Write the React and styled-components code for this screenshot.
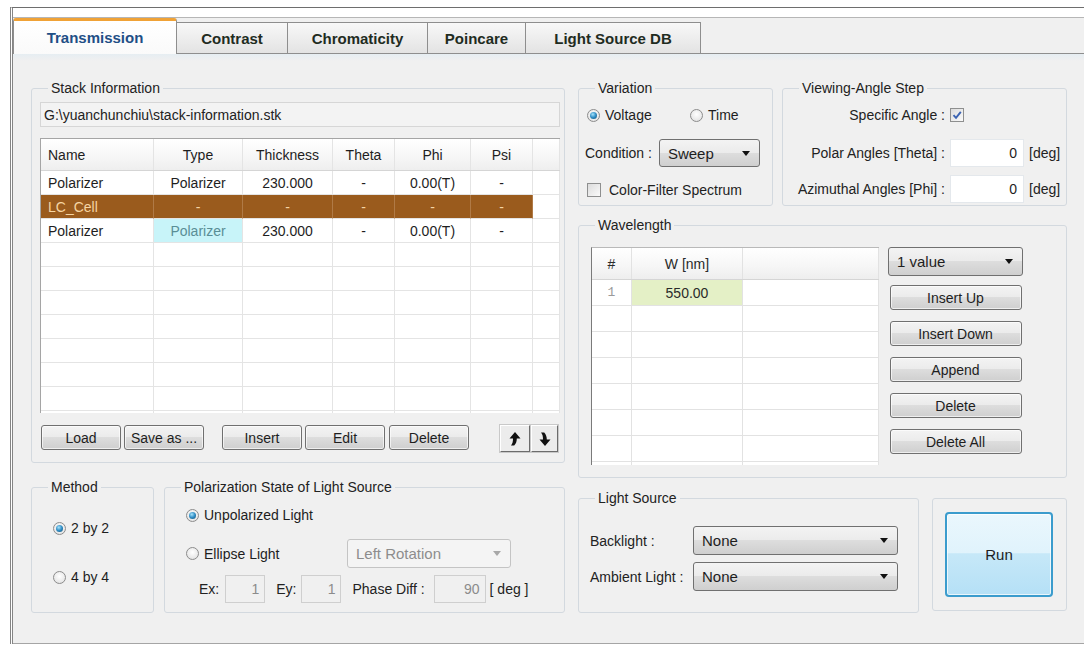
import React from "react";
import styled, { createGlobalStyle } from "styled-components";

const GlobalStyle = createGlobalStyle`
  * { box-sizing: border-box; }
  html, body { margin: 0; padding: 0; background: #fff; }
  body {
    font-family: "Liberation Sans", Arial, sans-serif;
    font-size: 14px;
    color: #1e1e1e;
  }
`;

const Window = styled.div`
  margin: 7px 0 0 10px;
  height: 637px;
  border-top: 1px solid #6e6e6e;
  border-left: 3px double #858585;
  display: flex;
  flex-direction: column;
`;

const TabStrip = styled.div`
  margin-top: 9px;
  height: 37px;
  display: flex;
  align-items: flex-end;
  background: #f0f0f0;
  border-top: 1px solid #b6b6b6;
  border-bottom: 1px solid #8e8e8e;
`;

const Tab = styled.div`
  width: ${(p) => p.$w}px;
  height: ${(p) => (p.$active ? 36 : 31)}px;
  margin-bottom: ${(p) => (p.$active ? -1 : 0)}px;
  display: flex;
  align-items: center;
  justify-content: center;
  font-size: 15px;
  font-weight: bold;
  color: ${(p) => (p.$active ? "#1f4f86" : "#1f2c1f")};
  border-right: 1px solid #8e8e8e;
  border-top: ${(p) => (p.$active ? "3px solid #f0a236" : "1px solid #8e8e8e")};
  border-left: ${(p) => (p.$active ? "1px solid #8e8e8e" : "none")};
  border-radius: ${(p) => (p.$active ? "3px 3px 0 0" : "0")};
  background: ${(p) =>
    p.$active
      ? "linear-gradient(#ffffff, #fafafa)"
      : "linear-gradient(#f8f8f8, #e3e3e3)"};
`;

const Body = styled.div`
  flex: 1;
  background: linear-gradient(#e6edf2, #f0f0f0 7px);
  border-bottom: 1px solid #a5a5a5;
  padding: 26px 0 0 18px;
  display: flex;
  gap: 13px;
  align-items: flex-start;
`;

const Column = styled.div`
  width: ${(p) => p.$w}px;
  display: flex;
  flex-direction: column;
`;

const Row = styled.div`
  display: flex;
  align-items: ${(p) => p.$align || "center"};
  gap: ${(p) => p.$gap || 0}px;
  margin-top: ${(p) => p.$mt || 0}px;
  margin-left: ${(p) => p.$ml || 0}px;
  height: ${(p) => (p.$h ? `${p.$h}px` : "auto")};
`;

const Group = styled.fieldset`
  margin: ${(p) => p.$mt || 0}px 0 0 0;
  padding: 0;
  min-width: 0;
  width: ${(p) => p.$w}px;
  height: ${(p) => p.$h}px;
  border: 1px solid #d3d9df;
  border-radius: 3px;
`;

const Caption = styled.legend`
  margin-left: 16px;
  padding: 0 3px;
  line-height: 16px;
  font-size: 14px;
  color: #222;
`;

const Inner = styled.div`
  padding: ${(p) => p.$pad};
  display: flex;
  flex-direction: column;
`;

const PathField = styled.div`
  height: 25px;
  display: flex;
  align-items: center;
  padding-left: 3px;
  border: 1px solid #d6d6d6;
  background: #f3f3f3;
  color: #222;
`;

/* stack table */
const StackTable = styled.div`
  margin-top: 11px;
  height: 275px;
  background: #fff;
  border-left: 1px solid #a5a5a5;
  border-top: 1px solid #a5a5a5;
  overflow: hidden;
`;

const StackRow = styled.div`
  display: grid;
  grid-template-columns: 113px 89px 90px 62px 76px 62px 1fr;
  height: ${(p) => (p.$head ? 32 : 24)}px;
  background: ${(p) =>
    p.$head ? "linear-gradient(#ffffff, #f6f6f6 60%, #eeeeee)" : "#fff"};
  border-bottom: ${(p) => (p.$head ? "1px solid #d5d5d5" : "none")};
`;

const Cell = styled.div`
  display: flex;
  align-items: center;
  justify-content: ${(p) => (p.$left ? "flex-start" : "center")};
  padding: 0 ${(p) => (p.$left ? 7 : 2)}px;
  border-right: 1px solid ${(p) => (p.$tone === "lc" ? "#b07a46" : "#e4e4e4")};
  border-bottom: ${(p) => (p.$head ? "none" : "1px solid #e4e4e4")};
  white-space: nowrap;
  background: ${(p) =>
    p.$tone === "lc" ? "#9a5b1d" : p.$tone === "sel" ? "#c8f4f9" : "transparent"};
  color: ${(p) =>
    p.$tone === "lc" ? "#f6d5a3" : p.$tone === "sel" ? "#5a8e96" : "#1e1e1e"};
`;

/* buttons */
const PushButton = styled.div`
  width: ${(p) => p.$w}px;
  height: 25px;
  margin-left: ${(p) => p.$ml || 0}px;
  margin-top: ${(p) => p.$mt || 0}px;
  display: flex;
  align-items: center;
  justify-content: center;
  border: 1px solid #707070;
  border-radius: 3px;
  background: linear-gradient(#f3f3f3 0%, #ebebeb 49%, #dddddd 50%, #cfcfcf 100%);
  box-shadow: inset 0 0 0 1px rgba(255, 255, 255, 0.65);
  color: #1e1e1e;
`;

const ArrowButton = styled.div`
  width: ${(p) => p.$w}px;
  height: 27px;
  margin-left: ${(p) => p.$ml || 0}px;
  display: flex;
  align-items: center;
  justify-content: center;
  background: #ececec;
  border: 1px solid;
  border-color: #ffffff #6c6c6c #6c6c6c #ffffff;
  box-shadow: 0 0 0 1px #c9c9c9;
`;

const Combo = styled.div`
  width: ${(p) => p.$w}px;
  height: ${(p) => p.$h || 29}px;
  margin-left: ${(p) => p.$ml || 0}px;
  display: flex;
  align-items: center;
  justify-content: space-between;
  padding: 0 9px 0 8px;
  font-size: 15px;
  border: 1px solid ${(p) => (p.$off ? "#c4c4c4" : "#707070")};
  border-radius: 3px;
  color: ${(p) => (p.$off ? "#8d8d8d" : "#1e1e1e")};
  background: ${(p) =>
    p.$off
      ? "#f4f4f4"
      : "linear-gradient(#f3f3f3 0%, #ebebeb 49%, #dddddd 50%, #cfcfcf 100%)"};
  &::after {
    content: "";
    border-left: 4px solid transparent;
    border-right: 4px solid transparent;
    border-top: 5px solid ${(p) => (p.$off ? "#a8a8a8" : "#111")};
  }
`;

const RunButton = styled.div`
  width: 108px;
  height: 85px;
  display: flex;
  align-items: center;
  justify-content: center;
  border: 2px solid #3b9ccd;
  border-radius: 4px;
  background: linear-gradient(#eaf7fd 0%, #e0f3fc 48%, #c6e8f8 49%, #b5e0f6 100%);
  box-shadow: inset 0 0 0 1px rgba(255, 255, 255, 0.7);
  font-size: 15px;
  color: #1e1e1e;
`;

/* radios, checks, inputs */
const Option = styled.div`
  display: flex;
  align-items: center;
  gap: 5px;
  width: ${(p) => (p.$w ? `${p.$w}px` : "auto")};
  height: 20px;
`;

const RadioDot = styled.span`
  width: 13px;
  height: 13px;
  flex: none;
  border-radius: 50%;
  border: 1px solid #8c8c8c;
  background: radial-gradient(circle at 50% 40%, #ffffff 0%, #e2e2e2 85%);
  display: flex;
  align-items: center;
  justify-content: center;
  &::after {
    content: "";
    display: ${(p) => (p.$on ? "block" : "none")};
    width: 7px;
    height: 7px;
    border-radius: 50%;
    background: radial-gradient(circle at 40% 35%, #a6e3fb 0%, #2f8cc4 50%, #134f72 100%);
  }
`;

const CheckBox = styled.span`
  width: 14px;
  height: 14px;
  flex: none;
  border: 1px solid #8e8f8f;
  background: linear-gradient(135deg, #dcdcdc, #fafafa);
  display: flex;
  align-items: center;
  justify-content: center;
`;

const NumBox = styled.div`
  width: ${(p) => p.$w}px;
  height: 28px;
  display: flex;
  align-items: center;
  justify-content: flex-end;
  padding-right: ${(p) => (p.$off ? 5 : 6)}px;
  background: ${(p) => (p.$off ? "#f0f0f0" : "#fff")};
  border: 1px solid ${(p) => (p.$off ? "#cfcfcf" : "#e4e8ec")};
  color: ${(p) => (p.$off ? "#8b8b8b" : "#1e1e1e")};
`;

const Label = styled.span`
  width: ${(p) => (p.$w ? `${p.$w}px` : "auto")};
  text-align: ${(p) => p.$align || "left"};
  white-space: nowrap;
  color: #222;
`;

const AngleRow = styled.div`
  display: grid;
  grid-template-columns: 157px 74px auto;
  column-gap: 5px;
  align-items: center;
  height: ${(p) => p.$h}px;
  margin-top: ${(p) => p.$mt || 0}px;
`;

/* wavelength table */
const WaveTable = styled.div`
  width: 288px;
  height: 218px;
  background: #fff;
  border-left: 1px solid #7a7a7a;
  border-top: 1px solid #b9b9b9;
  overflow: hidden;
`;

const WaveRow = styled.div`
  display: grid;
  grid-template-columns: 40px 111px 1fr;
  height: ${(p) => (p.$head ? 32 : 26)}px;
  background: ${(p) =>
    p.$head ? "linear-gradient(#ffffff, #f6f6f6 60%, #eeeeee)" : "#fff"};
  border-bottom: ${(p) => (p.$head ? "1px solid #d5d5d5" : "none")};
`;

const WaveCell = styled.div`
  display: flex;
  align-items: center;
  justify-content: center;
  border-right: 1px solid #e2e2e2;
  border-bottom: ${(p) => (p.$head ? "none" : "1px solid #e2e2e2")};
  background: ${(p) => (p.$lit ? "#e4f0c6" : "transparent")};
  color: ${(p) => (p.$index ? "#9a9a9a" : "#2a2a2a")};
  font-family: ${(p) =>
    p.$index ? '"Liberation Mono", "DejaVu Sans Mono", monospace' : "inherit"};
  font-size: ${(p) => (p.$index ? 13 : 14)}px;
`;

const UpArrow = () => (
  <svg width="14" height="16" viewBox="0 0 14 16">
    <path d="M7 1 L1.5 7.5 H5 C5 10.5 4.6 12.6 3 14.5 H6.2 C8 12.5 8.8 10.5 8.8 7.5 H12.5 Z" fill="#111" />
  </svg>
);

const DownArrow = () => (
  <svg width="14" height="16" viewBox="0 0 14 16">
    <path d="M7 15 L1.5 8.5 H5 C5 5.5 4.6 3.4 3 1.5 H6.2 C8 3.5 8.8 5.5 8.8 8.5 H12.5 Z" fill="#111" />
  </svg>
);

const Tick = () => (
  <svg width="10" height="10" viewBox="0 0 10 10">
    <path d="M1.5 5.2 L4 7.8 L8.8 1.8" stroke="#3a62b2" strokeWidth="1.9" fill="none" />
  </svg>
);

const tabs = [
  { name: "Transmission", w: 164, active: true },
  { name: "Contrast", w: 111 },
  { name: "Chromaticity", w: 140 },
  { name: "Poincare", w: 98 },
  { name: "Light Source DB", w: 175 },
];

const stackHead = ["Name", "Type", "Thickness", "Theta", "Phi", "Psi", ""];
const layers = [
  { name: "Polarizer", type: "Polarizer", thick: "230.000", theta: "-", phi: "0.00(T)", psi: "-" },
  { name: "LC_Cell", type: "-", thick: "-", theta: "-", phi: "-", psi: "-", lc: true },
  { name: "Polarizer", type: "Polarizer", thick: "230.000", theta: "-", phi: "0.00(T)", psi: "-", sel: true },
];

function StackGrid() {
  const blanks = Array.from({ length: 8 });
  return (
    <StackTable>
      <StackRow $head>
        {stackHead.map((h, i) => (
          <Cell key={i} $head $left={i === 0}>
            {h}
          </Cell>
        ))}
      </StackRow>
      {layers.map((l, i) => {
        const tone = l.lc ? "lc" : undefined;
        return (
          <StackRow key={i}>
            <Cell $left $tone={tone}>{l.name}</Cell>
            <Cell $tone={l.sel ? "sel" : tone}>{l.type}</Cell>
            <Cell $tone={tone}>{l.thick}</Cell>
            <Cell $tone={tone}>{l.theta}</Cell>
            <Cell $tone={tone}>{l.phi}</Cell>
            <Cell $tone={tone}>{l.psi}</Cell>
            <Cell />
          </StackRow>
        );
      })}
      {blanks.map((_, i) => (
        <StackRow key={`b${i}`}>
          {stackHead.map((_, j) => (
            <Cell key={j} />
          ))}
        </StackRow>
      ))}
    </StackTable>
  );
}

function WaveGrid() {
  return (
    <WaveTable>
      <WaveRow $head>
        <WaveCell $head>#</WaveCell>
        <WaveCell $head>W [nm]</WaveCell>
        <WaveCell $head />
      </WaveRow>
      <WaveRow>
        <WaveCell $index>1</WaveCell>
        <WaveCell $lit>550.00</WaveCell>
        <WaveCell />
      </WaveRow>
      {Array.from({ length: 7 }).map((_, i) => (
        <WaveRow key={i}>
          <WaveCell />
          <WaveCell />
          <WaveCell />
        </WaveRow>
      ))}
    </WaveTable>
  );
}

export default function App() {
  return (
    <>
      <GlobalStyle />
      <Window>
        <TabStrip>
          {tabs.map((t) => (
            <Tab key={t.name} $w={t.w} $active={t.active}>
              {t.name}
            </Tab>
          ))}
        </TabStrip>

        <Body>
          <Column $w={534}>
            <Group $w={534} $h={383}>
              <Caption>Stack Information</Caption>
              <Inner $pad="6px 4px 0 8px">
                <PathField>G:\yuanchunchiu\stack-information.stk</PathField>
                <StackGrid />
                <Row $mt={12} $align="flex-start">
                  <PushButton $w={80} $ml={1}>Load</PushButton>
                  <PushButton $w={80} $ml={3}>Save as ...</PushButton>
                  <PushButton $w={80} $ml={18}>Insert</PushButton>
                  <PushButton $w={80} $ml={3}>Edit</PushButton>
                  <PushButton $w={80} $ml={4}>Delete</PushButton>
                  <ArrowButton $w={30} $ml={31}>
                    <UpArrow />
                  </ArrowButton>
                  <ArrowButton $w={27} $ml={1}>
                    <DownArrow />
                  </ArrowButton>
                </Row>
              </Inner>
            </Group>

            <Row $mt={16} $gap={10} $align="flex-start">
              <Group $w={123} $h={134}>
                <Caption>Method</Caption>
                <Inner $pad="23px 0 0 21px">
                  <Option>
                    <RadioDot $on />
                    <span>2 by 2</span>
                  </Option>
                  <Row $mt={29}>
                    <Option>
                      <RadioDot />
                      <span>4 by 4</span>
                    </Option>
                  </Row>
                </Inner>
              </Group>

              <Group $w={401} $h={134}>
                <Caption>Polarization State of Light Source</Caption>
                <Inner $pad="10px 0 0 21px">
                  <Option>
                    <RadioDot $on />
                    <span>Unpolarized Light</span>
                  </Option>
                  <Row $mt={14} $h={29}>
                    <Option $w={161}>
                      <RadioDot />
                      <span>Ellipse Light</span>
                    </Option>
                    <Combo $w={164} $off>
                      Left Rotation
                    </Combo>
                  </Row>
                  <Row $mt={7} $h={28} $ml={13}>
                    <Label>Ex:</Label>
                    <NumBox $w={40} $off style={{ marginLeft: 6 }}>1</NumBox>
                    <Label style={{ marginLeft: 11 }}>Ey:</Label>
                    <NumBox $w={40} $off style={{ marginLeft: 5 }}>1</NumBox>
                    <Label style={{ marginLeft: 11 }}>Phase Diff :</Label>
                    <NumBox $w={52} $off style={{ marginLeft: 9 }}>90</NumBox>
                    <Label style={{ marginLeft: 4 }}>[ deg ]</Label>
                  </Row>
                </Inner>
              </Group>
            </Row>
          </Column>

          <Column $w={489}>
            <Row $gap={9} $align="flex-start">
              <Group $w={195} $h={126}>
                <Caption>Variation</Caption>
                <Inner $pad="9px 0 0 8px">
                  <Row>
                    <Option $w={103}>
                      <RadioDot $on />
                      <span>Voltage</span>
                    </Option>
                    <Option>
                      <RadioDot />
                      <span>Time</span>
                    </Option>
                  </Row>
                  <Row $mt={14} $h={28} $ml={-2} $gap={7}>
                    <Label>Condition :</Label>
                    <Combo $w={101} $h={28}>Sweep</Combo>
                  </Row>
                  <Row $mt={13}>
                    <Option>
                      <CheckBox />
                      <span style={{ marginLeft: 3 }}>Color-Filter Spectrum</span>
                    </Option>
                  </Row>
                </Inner>
              </Group>

              <Group $w={285} $h={126}>
                <Caption>Viewing-Angle Step</Caption>
                <Inner $pad="9px 0 0 5px">
                  <AngleRow $h={20}>
                    <Label $align="right">Specific Angle :</Label>
                    <CheckBox>
                      <Tick />
                    </CheckBox>
                    <span />
                  </AngleRow>
                  <AngleRow $h={28} $mt={14}>
                    <Label $align="right">Polar Angles [Theta] :</Label>
                    <NumBox $w={74}>0</NumBox>
                    <Label>[deg]</Label>
                  </AngleRow>
                  <AngleRow $h={28} $mt={8}>
                    <Label $align="right">Azimuthal Angles [Phi] :</Label>
                    <NumBox $w={74}>0</NumBox>
                    <Label>[deg]</Label>
                  </AngleRow>
                </Inner>
              </Group>
            </Row>

            <Group $w={489} $h={261} $mt={11}>
              <Caption>Wavelength</Caption>
              <Inner $pad="14px 0 0 12px">
                <Row $gap={9} $align="flex-start">
                  <WaveGrid />
                  <Column $w={135} style={{ alignItems: "center" }}>
                    <Combo $w={135}>1 value</Combo>
                    <PushButton $w={132} $mt={9}>Insert Up</PushButton>
                    <PushButton $w={132} $mt={11}>Insert Down</PushButton>
                    <PushButton $w={132} $mt={11}>Append</PushButton>
                    <PushButton $w={132} $mt={11}>Delete</PushButton>
                    <PushButton $w={132} $mt={11}>Delete All</PushButton>
                  </Column>
                </Row>
              </Inner>
            </Group>

            <Row $mt={12} $gap={13} $align="flex-start">
              <Group $w={341} $h={123}>
                <Caption>Light Source</Caption>
                <Inner $pad="20px 0 0 11px">
                  <Row $h={29}>
                    <Label $w={103}>Backlight :</Label>
                    <Combo $w={205}>None</Combo>
                  </Row>
                  <Row $h={29} $mt={7}>
                    <Label $w={103}>Ambient Light :</Label>
                    <Combo $w={205}>None</Combo>
                  </Row>
                </Inner>
              </Group>
              <Group $w={135} $h={113} $mt={8}>
                <Inner $pad="13px 0 0 12px">
                  <RunButton>Run</RunButton>
                </Inner>
              </Group>
            </Row>
          </Column>
        </Body>
      </Window>
    </>
  );
}
